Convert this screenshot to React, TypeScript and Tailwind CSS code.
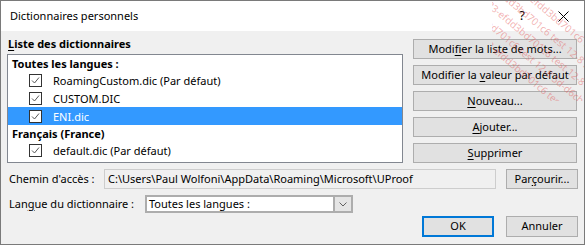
import React from "react";

const u = (s: string) => <span className="underline underline-offset-2">{s}</span>;

function Check() {
  return (
    <svg width="13" height="13" viewBox="0 0 13 13" className="shrink-0">
      <rect x="0.5" y="0.5" width="12" height="12" fill="#fff" stroke="#333" />
      <path d="M3 6.5 L5.5 9 L10 3.5" fill="none" stroke="#555" strokeWidth="1" />
    </svg>
  );
}

function Btn({ children, className = "" }: { children: React.ReactNode; className?: string }) {
  return (
    <div className={"flex items-center justify-center bg-[#e1e1e1] border border-[#adadad] text-black whitespace-nowrap " + className}>
      <span>{children}</span>
    </div>
  );
}

function Item({ label, selected = false }: { label: string; selected?: boolean }) {
  return (
    <div className={"h-[18px] flex items-center pl-[21px] " + (selected ? "bg-[#3399ff] text-white" : "text-black")}>
      <Check />
      <span className="ml-[11px] leading-none">{label}</span>
    </div>
  );
}

function Header({ label }: { label: string }) {
  return <div className="h-[16px] flex items-center pl-[4px] font-bold leading-none">{label}</div>;
}

const mark = "c1-12-8 5d-d6cb-4761-ba83-efdd3bd701c6 test 12-8 5d-d6cb-4761-ba83-efdd3bd701c6 test";

export default function App() {
  return (
    <div className="relative w-[585px] h-[245px] overflow-hidden border border-[#7a7a7a] bg-[#f0f0f0] font-['Noto_Sans',sans-serif] text-[11px] text-black flex flex-col">
      <div className="h-[30px] bg-white flex items-center pl-[9px] shrink-0">
        <span className="text-[11px]">Dictionnaires personnels</span>
        <span className="ml-auto mr-[33px] text-[13px]">?</span>
        <svg width="11" height="11" viewBox="0 0 11 11" className="mr-[15px]">
          <path d="M0.5 0.5 L10.5 10.5 M10.5 0.5 L0.5 10.5" stroke="#000" strokeWidth="1" />
        </svg>
      </div>

      <div className="flex flex-col pl-[6px] pr-[6px] pt-[5px]">
        <div className="flex gap-[10px]">
          <div className="w-[396px] flex flex-col">
            <div className="h-[16px] flex items-center pl-[1px] font-bold">
              <span>{u("L")}iste des dictionnaires</span>
            </div>
            <div className="mt-[2px] h-[109px] border border-[#828790] bg-white flex flex-col">
              <Header label="Toutes les langues :" />
              <Item label="RoamingCustom.dic (Par défaut)" />
              <Item label="CUSTOM.DIC" />
              <Item label="ENI.dic" selected />
              <Header label="Français (France)" />
              <Item label="default.dic (Par défaut)" />
            </div>
          </div>
          <div className="w-[164px] flex flex-col gap-[6px] pt-[3px]">
            <Btn className="h-[20px]">Modi{u("f")}ier la liste de mots...</Btn>
            <Btn className="h-[20px]">Modifier la {u("v")}aleur par défaut</Btn>
            <Btn className="h-[20px]">{u("N")}ouveau...</Btn>
            <Btn className="h-[20px]">{u("A")}jouter...</Btn>
            <Btn className="h-[20px]">{u("S")}upprimer</Btn>
          </div>
        </div>

        <div className="mt-[6px] h-[20px] flex items-center">
          <span className="w-[97px] shrink-0 pl-[2px] whitespace-nowrap">Chemin d'accès :</span>
          <div className="w-[392px] h-[20px] border border-[#cdcdcd] bg-[#f0f0f0] flex items-center pl-[3px] whitespace-nowrap">
            <span>C:\Users\Paul Wolfoni\AppData\Roaming\Microsoft\UProof</span>
          </div>
          <Btn className="ml-[10px] w-[72px] h-[20px]">Par{u("ç")}ourir...</Btn>
        </div>

        <div className="mt-[6px] h-[18px] flex items-center">
          <span className="w-[138px] shrink-0 pl-[2px] whitespace-nowrap">Lan{u("g")}ue du dictionnaire :</span>
          <div className="w-[208px] h-[18px] border-2 border-[#adadad] bg-white flex items-center">
            <span className="flex-1 pl-[2px] whitespace-nowrap">Toutes les langues :</span>
            <div className="w-[18px] h-full bg-[#e5e5e5] border-l-2 border-[#adadad] flex items-center justify-center">
              <svg width="8" height="5" viewBox="0 0 8 5">
                <path d="M0.5 0.5 L4 4 L7.5 0.5" fill="none" stroke="#606060" strokeWidth="1" />
              </svg>
            </div>
          </div>
        </div>

        <div className="mt-[3px] flex justify-end gap-[12px]">
          <div className="w-[72px] h-[21px] bg-[#e1e1e1] border-2 border-[#0078d7] flex items-center justify-center">OK</div>
          <Btn className="w-[72px] h-[21px]">Annuler</Btn>
        </div>
      </div>

      {/* watermark stamp in the top-right corner */}
      <div className="absolute top-0 right-0 w-[92px] h-[100px] overflow-hidden pointer-events-none">
        <div className="absolute left-[42px] top-[40px] w-0 h-0">
          <div className="absolute left-[-150px] top-[-38px] w-[300px] h-[76px] rotate-[40deg] flex flex-col justify-between overflow-hidden text-[10px] leading-[13px] text-[rgba(228,85,85,0.45)] whitespace-nowrap">
            <div className="ml-[-10px]">{mark}</div>
            <div className="ml-[-40px]">{mark}</div>
            <div className="ml-[-25px]">{mark}</div>
            <div className="ml-[-55px]">{mark}</div>
            <div className="ml-[-5px]">{mark}</div>
          </div>
        </div>
      </div>
    </div>
  );
}
